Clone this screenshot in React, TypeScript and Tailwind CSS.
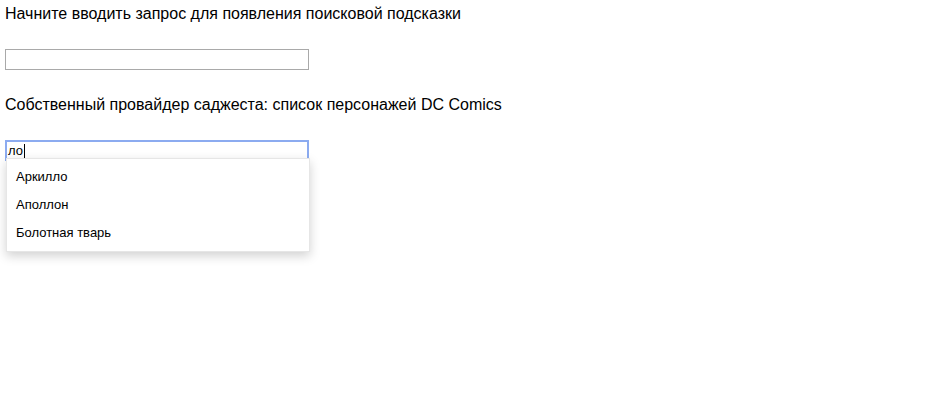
import React from 'react';

const suggestions = ['Аркилло', 'Аполлон', 'Болотная тварь'];

const App: React.FC = () => {
  return (
    <div className="min-h-[400px] bg-white px-[5px] pt-[5px] text-black" style={{ fontFamily: '"Liberation Sans", Arial, sans-serif' }}>
      <div className="text-[16px] leading-[18px]">Начните вводить запрос для появления поисковой подсказки</div>
      <div className="mt-[26px] h-[21px] w-[304px] border border-[#a9a9a9] bg-white" />

      <div className="mt-[26px] text-[16px] leading-[18px]">Собственный провайдер саджеста: список персонажей DC Comics</div>

      <div className="relative mt-[26px] w-[304px]">
        <div className="flex h-[21px] w-[304px] items-center border-2 border-[#8cabf0] bg-white pl-[1px] text-[13px]">
          <span>ло</span>
          <span className="ml-[1px] h-[14px] w-px bg-black" />
        </div>
        <div className="absolute left-[1px] top-[18px] z-10 w-[304px] border border-[#e6e6e6] bg-white py-[4px] shadow-[0_4px_10px_rgba(0,0,0,0.18)]">
          {suggestions.map((s) => (
            <div key={s} className="flex h-[28px] items-center pl-[9px] text-[13px]">
              {s}
            </div>
          ))}
        </div>
      </div>
    </div>
  );
};

export default App;
